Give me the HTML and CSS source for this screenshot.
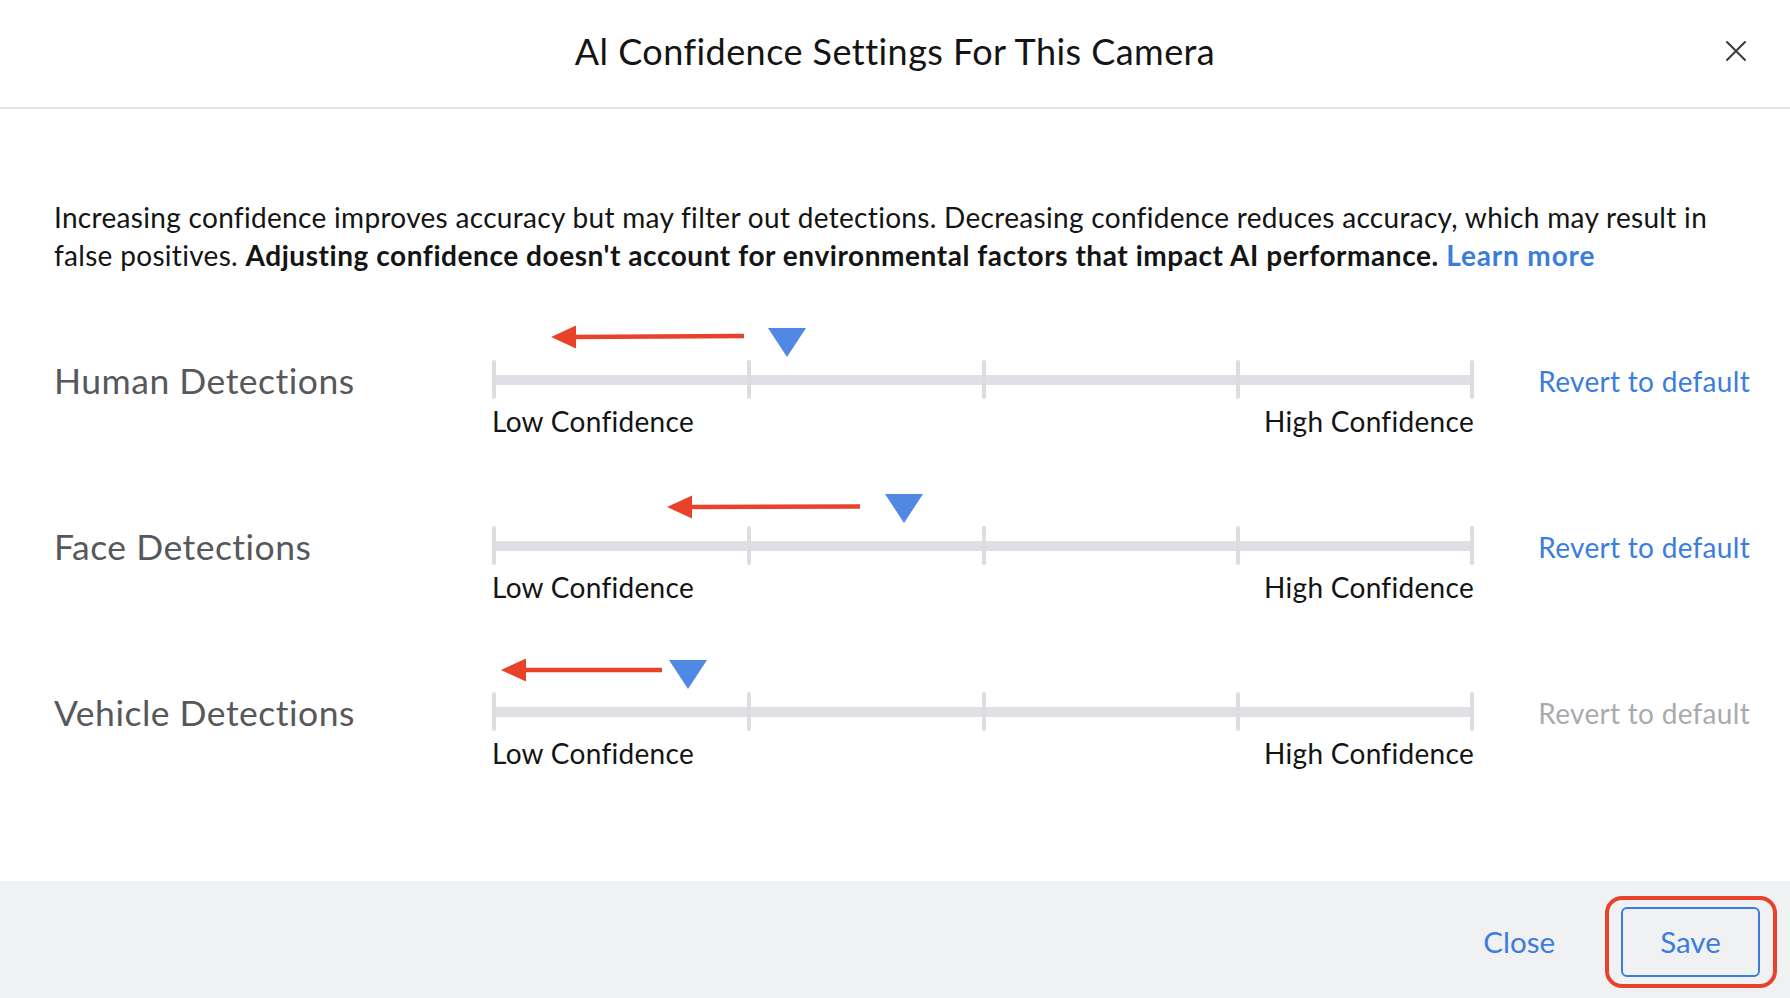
FILE: index.html
```html
<!DOCTYPE html>
<html lang="en">
<head>
<meta charset="utf-8">
<title>AI Confidence Settings For This Camera</title>
<link rel="stylesheet" href="styles.css">
</head>
<body>
<div class="modal">
  <header class="modal-header">
    <div></div>
    <h1 class="modal-title">Al Confidence Settings For This Camera</h1>
    <button class="close-x" aria-label="Close">
      <svg width="22" height="22" viewBox="0 0 22 22"><path d="M2 2 L20 20 M20 2 L2 20" stroke="#3a3a3c" stroke-width="2" stroke-linecap="round" fill="none"/></svg>
    </button>
  </header>

  <main class="modal-body">
    <p class="intro">Increasing confidence improves accuracy but may filter out detections. Decreasing confidence reduces accuracy, which may result in false positives. <strong>Adjusting confidence doesn't account for environmental factors that impact AI performance.</strong> <a class="link" href="#">Learn more</a></p>

    <div class="rows">
      <section class="row">
        <div class="row-label">Human Detections</div>
        <div class="slider">
          <div class="thumb-lane"><span class="thumb" style="left: 295px"></span></div>
          <div class="track-area">
            <div class="track"></div>
            <span class="tick" style="left: 0px"></span>
            <span class="tick" style="left: 255px"></span>
            <span class="tick" style="left: 490px"></span>
            <span class="tick" style="left: 744px"></span>
            <span class="tick" style="left: 978px"></span>
          </div>
          <div class="scale-labels"><span>Low Confidence</span><span>High Confidence</span></div>
          <svg class="annot-arrow" style="left: 57px; top: 3px" width="200" height="30" viewBox="0 0 200 30"><path d="M195 13 L22 14" stroke="#e8422b" stroke-width="4.5" fill="none"/><path d="M2 14 L27 2.5 L27 25.5 Z" fill="#e8422b"/></svg>
        </div>
        <div class="revert"><a class="link" href="#">Revert to default</a></div>
      </section>

      <section class="row">
        <div class="row-label">Face Detections</div>
        <div class="slider">
          <div class="thumb-lane"><span class="thumb" style="left: 412px"></span></div>
          <div class="track-area">
            <div class="track"></div>
            <span class="tick" style="left: 0px"></span>
            <span class="tick" style="left: 255px"></span>
            <span class="tick" style="left: 490px"></span>
            <span class="tick" style="left: 744px"></span>
            <span class="tick" style="left: 978px"></span>
          </div>
          <div class="scale-labels"><span>Low Confidence</span><span>High Confidence</span></div>
          <svg class="annot-arrow" style="left: 173px; top: 7px" width="200" height="30" viewBox="0 0 200 30"><path d="M195 13.5 L22 14" stroke="#e8422b" stroke-width="4.5" fill="none"/><path d="M2 14 L27 2.5 L27 25.5 Z" fill="#e8422b"/></svg>
        </div>
        <div class="revert"><a class="link" href="#">Revert to default</a></div>
      </section>

      <section class="row">
        <div class="row-label">Vehicle Detections</div>
        <div class="slider">
          <div class="thumb-lane"><span class="thumb" style="left: 196px"></span></div>
          <div class="track-area">
            <div class="track"></div>
            <span class="tick" style="left: 0px"></span>
            <span class="tick" style="left: 255px"></span>
            <span class="tick" style="left: 490px"></span>
            <span class="tick" style="left: 744px"></span>
            <span class="tick" style="left: 978px"></span>
          </div>
          <div class="scale-labels"><span>Low Confidence</span><span>High Confidence</span></div>
          <svg class="annot-arrow" style="left: 7px; top: 4px" width="170" height="30" viewBox="0 0 170 30"><path d="M163 14 L22 14" stroke="#e8422b" stroke-width="4.5" fill="none"/><path d="M2 14 L27 2.5 L27 25.5 Z" fill="#e8422b"/></svg>
        </div>
        <div class="revert"><span class="link-disabled">Revert to default</span></div>
      </section>
    </div>
  </main>

  <footer class="modal-footer">
    <button class="btn-text">Close</button>
    <div class="save-wrap">
      <button class="btn-outline">Save</button>
      <span class="annot-box"></span>
    </div>
  </footer>
</div>
</body>
</html>
```

FILE: styles.css
```css
* { box-sizing: border-box; }

html, body {
  margin: 0;
  padding: 0;
  background: #ffffff;
}

body {
  font-family: Lato, "Noto Sans", "Liberation Sans", sans-serif;
  color: #141414;
}

.modal {
  width: 1790px;
  height: 998px;
  display: flex;
  flex-direction: column;
  overflow: hidden;
}

.modal-header {
  height: 109px;
  flex: 0 0 auto;
  border-bottom: 2px solid #e3e4e6;
  display: grid;
  grid-template-columns: 1fr auto 1fr;
  align-items: center;
  padding: 0 43px 6px 43px;
}

.modal-title {
  margin: 0;
  font-size: 36px;
  letter-spacing: 0.45px;
  font-weight: 400;
  color: #141414;
}

.close-x {
  justify-self: end;
  border: 0;
  background: transparent;
  padding: 0;
  width: 22px;
  height: 22px;
  display: flex;
  cursor: pointer;
}

.modal-body {
  flex: 1 1 auto;
  padding: 89px 40px 0 54px;
}

.intro {
  margin: 0 14px 0 0;
  font-size: 28px;
  letter-spacing: 0.31px;
  line-height: 38px;
  color: #141414;
}

.intro strong {
  font-weight: 700;
  letter-spacing: 0.56px;
}

.link {
  color: #3b7ddd;
  text-decoration: none;
}

.intro .link {
  font-weight: 700;
  letter-spacing: 0.85px;
}

.link-disabled {
  color: #a9abaf;
}

.rows {
  margin-top: 46px;
  display: flex;
  flex-direction: column;
  gap: 52px;
}

.row {
  display: grid;
  grid-template-columns: 438px 982px 1fr;
  grid-template-rows: 40px 39px 35px;
}

.row-label {
  grid-column: 1;
  grid-row: 2;
  align-self: center;
  font-size: 35.5px;
  letter-spacing: 0.5px;
  color: #56585c;
  line-height: 40px;
  margin-top: 2px;
}

.slider {
  grid-column: 2;
  grid-row: 1 / 4;
  position: relative;
  display: grid;
  grid-template-rows: 40px 39px 37px;
}

.thumb-lane {
  position: relative;
}

.thumb {
  position: absolute;
  top: 8px;
  width: 0;
  height: 0;
  margin-left: -19px;
  border-left: 19px solid transparent;
  border-right: 19px solid transparent;
  border-top: 29px solid #5088e4;
}

.track-area {
  position: relative;
  display: flex;
  align-items: center;
}

.track {
  width: 100%;
  height: 10px;
  background: #dfe0e3;
}

.tick {
  position: absolute;
  top: 0;
  width: 4px;
  height: 39px;
  border-radius: 2px;
  background: #dcdde0;
}

.scale-labels {
  display: flex;
  justify-content: space-between;
  font-size: 28px;
  letter-spacing: 0.3px;
  line-height: 30px;
  padding-top: 7px;
  color: #141414;
}

.annot-arrow {
  position: absolute;
}

.revert {
  grid-column: 3;
  grid-row: 2;
  align-self: center;
  justify-self: end;
  font-size: 28px;
  letter-spacing: 0.3px;
  line-height: 34px;
  margin-top: 2px;
}

.modal-footer {
  flex: 0 0 117px;
  background: #f0f1f3;
  display: flex;
  justify-content: flex-end;
  align-items: flex-start;
  padding: 26px 30px 0 0;
  gap: 66px;
}

.btn-text {
  border: 0;
  background: transparent;
  font-family: inherit;
  font-size: 29.5px;
  color: #3b7ddd;
  height: 70px;
  padding: 0 0 2px 0;
  cursor: pointer;
}

.save-wrap {
  position: relative;
}

.btn-outline {
  width: 139px;
  height: 70px;
  border: 2px solid #3b7ddd;
  border-radius: 6px;
  background: transparent;
  font-family: inherit;
  font-size: 29.5px;
  color: #3b7ddd;
  padding: 0 0 2px 0;
  cursor: pointer;
}

.annot-box {
  position: absolute;
  top: -11px;
  bottom: -11px;
  left: -16px;
  right: -17px;
  border: 4px solid #e8422b;
  border-radius: 17px;
  pointer-events: none;
}
```
